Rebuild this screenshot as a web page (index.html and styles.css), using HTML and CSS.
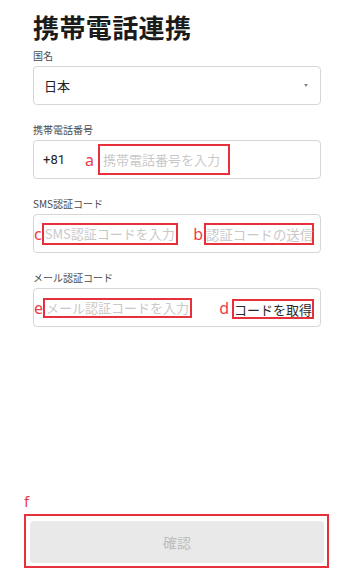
FILE: index.html
```html
<!DOCTYPE html>
<html lang="ja">
<head>
<meta charset="utf-8">
<link rel="stylesheet" href="styles.css">
</head>
<body>
<div class="page">
  <div class="form">
    <h1 class="title">携帯電話連携</h1>

    <div class="field">
      <div class="label">国名</div>
      <div class="box select">
        <span class="value">日本</span>
        <span class="caret"></span>
      </div>
    </div>

    <div class="field">
      <div class="label">携帯電話番号</div>
      <div class="box phone">
        <span class="value">+81</span>
        <span class="mark mark-a">a</span>
        <span class="hl hl-a placeholder">携帯電話番号を入力</span>
      </div>
    </div>

    <div class="field">
      <div class="label">SMS認証コード</div>
      <div class="box split">
        <span class="group"><span class="mark">c</span><span class="hl hl-c placeholder">SMS認証コードを入力</span></span>
        <span class="group"><span class="mark mark-b">b</span><span class="hl hl-b placeholder">認証コードの送信</span></span>
      </div>
    </div>

    <div class="field">
      <div class="label">メール認証コード</div>
      <div class="box split">
        <span class="group"><span class="mark">e</span><span class="hl hl-e placeholder">メール認証コードを入力</span></span>
        <span class="group"><span class="mark mark-d">d</span><span class="hl hl-d action">コードを取得</span></span>
      </div>
    </div>
  </div>

  <div class="footer">
    <div class="mark mark-f">f</div>
    <div class="hl hl-f">
      <button class="confirm" type="button">確認</button>
    </div>
  </div>
</div>
</body>
</html>
```

FILE: styles.css
```css
html, body {
  margin: 0;
  padding: 0;
  background: #ffffff;
}

body {
  font-family: "Noto Sans CJK JP", "Noto Sans", Roboto, sans-serif;
  color: #222;
}

.page {
  width: 343px;
  height: 580px;
  box-sizing: border-box;
  display: flex;
  flex-direction: column;
}

.form {
  padding: 10px 22px 0 33px;
}

.title {
  margin: 0;
  font-size: 26px;
  line-height: 34px;
  font-weight: 700;
  color: #1b1b1b;
  letter-spacing: 0.4px;
}

.field {
  margin-top: 5px;
}

.field + .field {
  margin-top: 18px;
}

.label {
  font-size: 10px;
  line-height: 14px;
  color: #4a4a4a;
  margin-bottom: 3px;
}

.box {
  height: 39px;
  box-sizing: border-box;
  border: 1px solid #d6d6d6;
  border-radius: 4px;
  display: flex;
  align-items: center;
  font-size: 13px;
}

.value {
  color: #222;
  font-size: 13px;
}

.select {
  padding: 0 12px 0 10px;
  justify-content: space-between;
}

.caret {
  width: 0;
  height: 0;
  border-left: 2.5px solid transparent;
  border-right: 2.5px solid transparent;
  border-top: 3px solid #888;
}

.phone {
  padding-left: 9px;
}

.phone .value {
  font-family: Roboto, "Noto Sans", sans-serif;
}

.placeholder {
  color: #c9c9c9;
}

.action {
  color: #2a2a2a;
}

.mark {
  color: #ec3b47;
  font-family: "Noto Sans", Roboto, sans-serif;
  font-size: 16px;
  line-height: 16px;
}

.hl {
  border: 2px solid #e8303c;
  box-sizing: border-box;
  display: inline-flex;
  align-items: center;
  white-space: nowrap;
}

.mark-a {
  margin-left: 20px;
  margin-right: 4px;
}

.hl-a {
  height: 31px;
  width: 132px;
  padding-left: 3px;
}

.split {
  justify-content: space-between;
  padding-right: 6px;
}

.group {
  display: inline-flex;
  align-items: center;
}

.hl-c {
  height: 22px;
  width: 136px;
  padding-left: 1px;
  margin-left: 0;
}

.mark-b {
  margin-right: 1px;
}

.hl-b {
  height: 22px;
  width: 110px;
  padding-left: 0;
  font-size: 13.4px;
}

.hl-e {
  height: 20px;
  width: 149px;
  padding-left: 1px;
}

.mark-d {
  margin-right: 3px;
}

.hl-d {
  height: 20px;
  width: 82px;
  padding-left: 0;
  margin-top: 3px;
}

.footer {
  margin-top: auto;
  padding: 0 14px 12px 24px;
}

.mark-f {
  font-size: 15px;
  line-height: 16px;
  margin-bottom: 5px;
}

.hl-f {
  display: block;
  padding: 5px 3px 3px 4px;
}

.confirm {
  display: block;
  width: 100%;
  height: 42px;
  border: none;
  border-radius: 4px;
  background: #e9e9e9;
  color: #bdbdbd;
  font-family: "Noto Sans CJK JP", sans-serif;
  font-size: 14px;
  padding: 0;
}
```
